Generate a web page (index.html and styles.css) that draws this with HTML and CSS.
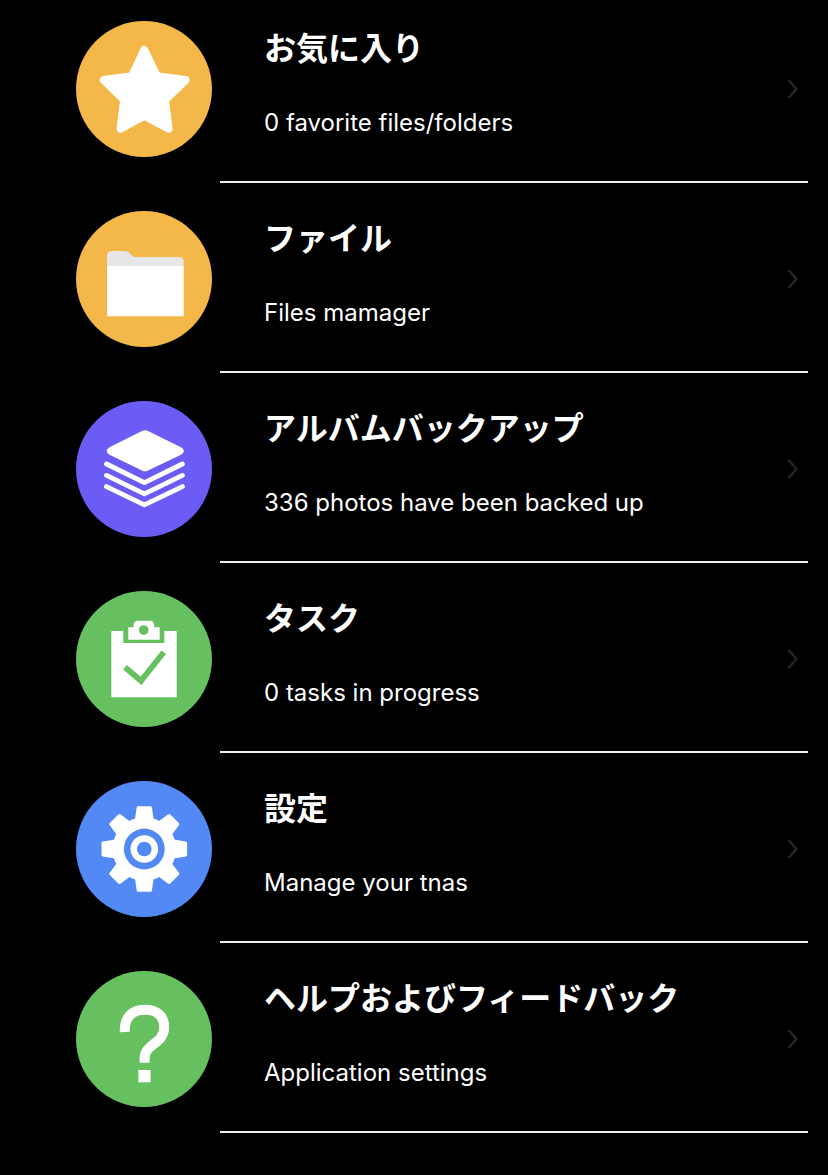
FILE: index.html
```html
<!DOCTYPE html>
<html lang="ja">
<head>
<meta charset="utf-8">
<meta name="viewport" content="width=device-width, initial-scale=1">
<title>TNAS</title>
<link rel="stylesheet" href="styles.css">
</head>
<body>
<svg class="defs" aria-hidden="true">
  <symbol id="chevron" viewBox="0 0 12 20"><path d="M1.6 1 L9.4 10 L1.6 19" fill="none" stroke="currentColor" stroke-width="2.4"/></symbol>
</svg>
<nav>
  <ul class="menu">
    <li><a class="row" href="#favorites">
      <svg class="icon orange" viewBox="0 0 136 136" aria-hidden="true">
        <path d="M68.3 29 L80.9 55.3 L109.6 59 L88.9 79 L92.6 107.7 L68.3 94.8 L44.5 107.7 L48.1 79 L27.8 59 L55.9 55.3 Z" fill="#fff" stroke="#fff" stroke-width="8" stroke-linejoin="round"/>
      </svg>
      <span class="body"><span class="text"><span class="title">お気に入り</span><span class="note">0 favorite files/folders</span></span><svg class="chevron" aria-hidden="true"><use href="#chevron"/></svg></span>
    </a></li>
    <li><a class="row" href="#files">
      <svg class="icon orange" viewBox="0 0 136 136" aria-hidden="true">
        <path d="M31 56 V45 Q31 40 36 40 H49 Q51 40 52.5 41.3 L58 46 H103 Q107.7 46 107.7 51 V56 Z" fill="#e6e6e6"/>
        <path d="M31 55 H107.7 V105.3 H31 Z" fill="#fff"/>
      </svg>
      <span class="body"><span class="text"><span class="title">ファイル</span><span class="note">Files mamager</span></span><svg class="chevron" aria-hidden="true"><use href="#chevron"/></svg></span>
    </a></li>
    <li><a class="row" href="#album">
      <svg class="icon purple" viewBox="0 0 136 136" aria-hidden="true">
        <path d="M66.5 29.8 Q69 28.6 71.5 29.8 L105 46.3 Q107.9 47.8 107.9 50 Q107.9 52.2 105 53.7 L71.5 69.7 Q69 70.9 66.5 69.7 L33.5 53.7 Q30.7 52.2 30.7 50 Q30.7 47.8 33.5 46.3 Z" fill="#fff"/>
        <path d="M30.5 63 L68.4 81.6 L106.4 63 M30.5 74.4 L68.4 92.8 L106.4 74.4 M30.5 85.6 L68.4 103.8 L106.4 85.6" fill="none" stroke="#fff" stroke-width="4.8" stroke-linecap="round" stroke-linejoin="round"/>
      </svg>
      <span class="body"><span class="text"><span class="title">アルバムバックアップ</span><span class="note">336 photos have been backed up</span></span><svg class="chevron" aria-hidden="true"><use href="#chevron"/></svg></span>
    </a></li>
    <li><a class="row" href="#tasks">
      <svg class="icon green" viewBox="0 0 136 136" aria-hidden="true">
        <path d="M36.3 40 H47.3 V52 H88.3 V40 H99.7 Q100.7 40 100.7 41 V106.3 H36.3 Q35.3 106.3 35.3 105.3 V41 Q35.3 40 36.3 40 Z" fill="#fff"/>
        <path fill-rule="evenodd" d="M52.3 36.3 H57.6 V34 Q58 29.7 62 29.7 H74 Q78 29.7 78.2 34 V36.3 H83.7 V48.7 H52.3 Z M67.7 34.2 a4.8 4.8 0 1 0 0.01 0 Z" fill="#fff"/>
        <path d="M49 76.3 L65 89.8 L87.7 61.3" fill="none" stroke="#66c060" stroke-width="5.8"/>
      </svg>
      <span class="body"><span class="text"><span class="title">タスク</span><span class="note">0 tasks in progress</span></span><svg class="chevron" aria-hidden="true"><use href="#chevron"/></svg></span>
    </a></li>
    <li><a class="row" href="#settings">
      <svg class="icon blue" viewBox="0 0 136 136" aria-hidden="true">
        <defs><path id="teeth" d="M-9.4 -29 L-7.6 -41.5 Q-7.4 -42.8 -6 -42.8 H6 Q7.4 -42.8 7.6 -41.5 L9.4 -29 V29 L7.6 41.5 Q7.4 42.8 6 42.8 H-6 Q-7.4 42.8 -7.6 41.5 L-9.4 29 Z"/></defs>
        <g transform="translate(68.3 68)" fill="#fff">
          <circle r="31.8"/>
          <use href="#teeth"/><use href="#teeth" transform="rotate(45)"/><use href="#teeth" transform="rotate(90)"/><use href="#teeth" transform="rotate(135)"/>
          <circle r="20.4" fill="#5289f5"/><circle r="13.8"/><circle r="7.3" fill="#5289f5"/>
        </g>
      </svg>
      <span class="body"><span class="text"><span class="title">設定</span><span class="note">Manage your tnas</span></span><svg class="chevron" aria-hidden="true"><use href="#chevron"/></svg></span>
    </a></li>
    <li><a class="row" href="#help">
      <svg class="icon green" viewBox="0 0 136 136" aria-hidden="true">
        <path d="M48.8 61 C48.2 46.5 56 38.8 68.7 38.8 C81 38.8 88.2 45.2 88.2 56 C88.2 73 68.6 73 68.6 87 V91.7" fill="none" stroke="#fff" stroke-width="10"/>
        <rect x="62.4" y="99" width="12.2" height="12.3" fill="#fff"/>
      </svg>
      <span class="body"><span class="text"><span class="title">ヘルプおよびフィードバック</span><span class="note">Application settings</span></span><svg class="chevron" aria-hidden="true"><use href="#chevron"/></svg></span>
    </a></li>
  </ul>
</nav>
</body>
</html>
```
FILE: styles.css
```css
body {
  margin: 0;
  background: #000;
  color: #fff;
  font-family: Inter, "Noto Sans CJK JP", sans-serif;
}

.defs {
  display: none;
}

.menu {
  margin: 0;
  padding: 0 20px 0 76px;
  list-style: none;
}

.row {
  display: flex;
  gap: 8px;
  color: inherit;
  text-decoration: none;
}

.icon {
  flex: none;
  width: 136px;
  height: 136px;
  margin-top: 28px;
  border-radius: 50%;
}

.orange { background: #f4b74a; }
.purple { background: #6b5cf6; }
.green { background: #66c060; }
.blue { background: #5289f5; }

.body {
  flex: 1;
  min-width: 0;
  display: flex;
  align-items: center;
  justify-content: space-between;
  padding: 28px 9px 24px 44px;
  border-bottom: 2px solid #eef1f4;
}

.menu li:first-child .icon {
  margin-top: 21px;
}

.menu li:first-child .body {
  padding-top: 21px;
}

.text {
  display: flex;
  flex-direction: column;
  gap: 38px;
  padding: 8px 0 18px;
}

.title {
  font-size: 32px;
  line-height: 40px;
  font-weight: 700;
}

.note {
  font-size: 24px;
  line-height: 32px;
}

.chevron {
  flex: none;
  width: 12px;
  height: 20px;
  color: #262626;
}
```
